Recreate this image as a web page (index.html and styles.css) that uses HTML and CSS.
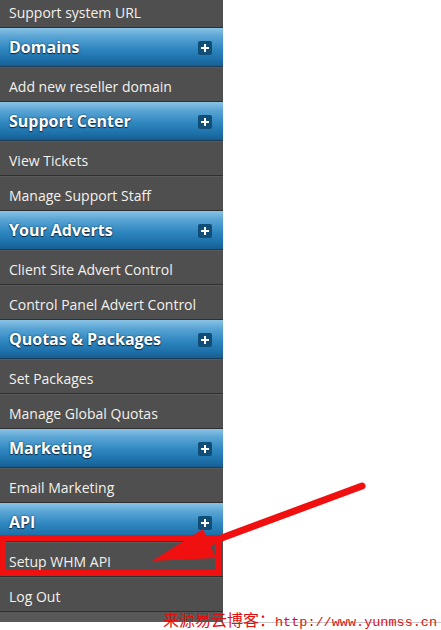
FILE: index.html
```html
<!DOCTYPE html>
<html>
<head>
<meta charset="utf-8">
<link rel="stylesheet" href="styles.css">
</head>
<body>
<div class="page">
  <nav class="sidebar">
    <div class="item first">Support system URL</div>
    <div class="head">Domains<span class="plus"></span></div>
    <div class="item">Add new reseller domain</div>
    <div class="head">Support Center<span class="plus"></span></div>
    <div class="item">View Tickets</div>
    <div class="item">Manage Support Staff</div>
    <div class="head">Your Adverts<span class="plus"></span></div>
    <div class="item">Client Site Advert Control</div>
    <div class="item">Control Panel Advert Control</div>
    <div class="head">Quotas &amp; Packages<span class="plus"></span></div>
    <div class="item">Set Packages</div>
    <div class="item">Manage Global Quotas</div>
    <div class="head">Marketing<span class="plus"></span></div>
    <div class="item">Email Marketing</div>
    <div class="head">API<span class="plus"></span></div>
    <div class="item">Setup WHM API</div>
    <div class="item">Log Out</div>
    <div class="foot"></div>
  </nav>
  <div class="rule"></div>
  <svg class="annot" width="441" height="630" viewBox="0 0 441 630">
    <rect x="3" y="538" width="215" height="35" fill="none" stroke="#f01010" stroke-width="6"/>
    <line x1="362" y1="486" x2="200" y2="546" stroke="#f01010" stroke-width="7" stroke-linecap="round"/>
    <polygon points="152,561 203,529 216,558" fill="#f01010"/>
  </svg>
  <div class="mark"><span class="cjk">来源易云博客：</span><span class="lat">http://www.yunmss.cn</span></div>
</div>
</body>
</html>
```

FILE: styles.css
```css
html, body {
  margin: 0;
  padding: 0;
  background: #ffffff;
}
.page {
  position: relative;
  width: 441px;
  height: 630px;
  overflow: hidden;
}
.sidebar {
  width: 223px;
  display: flex;
  flex-direction: column;
  margin-top: -7px;
  background: #4f4f4f;
  font-family: "Open Sans", "Liberation Sans", sans-serif;
}
.item {
  height: 28px;
  padding-top: 6px;
  border-bottom: 1px solid #2f2f2f;
  box-shadow: inset 0 1px 0 #5a5a5a;
  background: #4f4f4f;
  color: #f3f1ec;
  font-size: 14px;
  line-height: 14px;
  padding-left: 9px;
  display: flex;
  align-items: center;
}
.head {
  height: 38px;
  border-bottom: 1px solid #1b3d57;
  background: linear-gradient(180deg, #8ac3e5 0%, #5aa5d5 22%, #2f87c0 55%, #1c6ea7 85%, #175e90 100%);
  color: #ffffff;
  font-weight: 700;
  font-size: 16px;
  padding-left: 9px;
  padding-right: 11px;
  display: flex;
  align-items: center;
  justify-content: space-between;
  text-shadow: 0 1px 1px #0b2b45, 0 0 2px #0b3a5e;
}
.plus {
  width: 14px;
  height: 14px;
  background: #104d77;
  border-radius: 2px;
  position: relative;
  margin-top: 2px;
}
.plus::before, .plus::after {
  content: "";
  position: absolute;
  background: #ffffff;
}
.plus::before {
  left: 3px;
  top: 6px;
  width: 8px;
  height: 2px;
}
.plus::after {
  left: 6px;
  top: 3px;
  width: 2px;
  height: 8px;
}
.foot {
  height: 10px;
  background: #585858;
}
.rule {
  position: absolute;
  left: 223px;
  top: 622px;
  width: 218px;
  height: 1px;
  background: #c8c8c8;
}
.annot {
  position: absolute;
  left: 0;
  top: 0;
}
.mark {
  position: absolute;
  left: 163px;
  top: 610px;
  color: #e01010;
  white-space: nowrap;
  line-height: 18px;
}
.cjk {
  font-family: "Noto Sans CJK SC", serif;
  font-size: 16px;
}
.lat {
  font-family: "Liberation Mono", monospace;
  font-size: 13.5px;
}
```
